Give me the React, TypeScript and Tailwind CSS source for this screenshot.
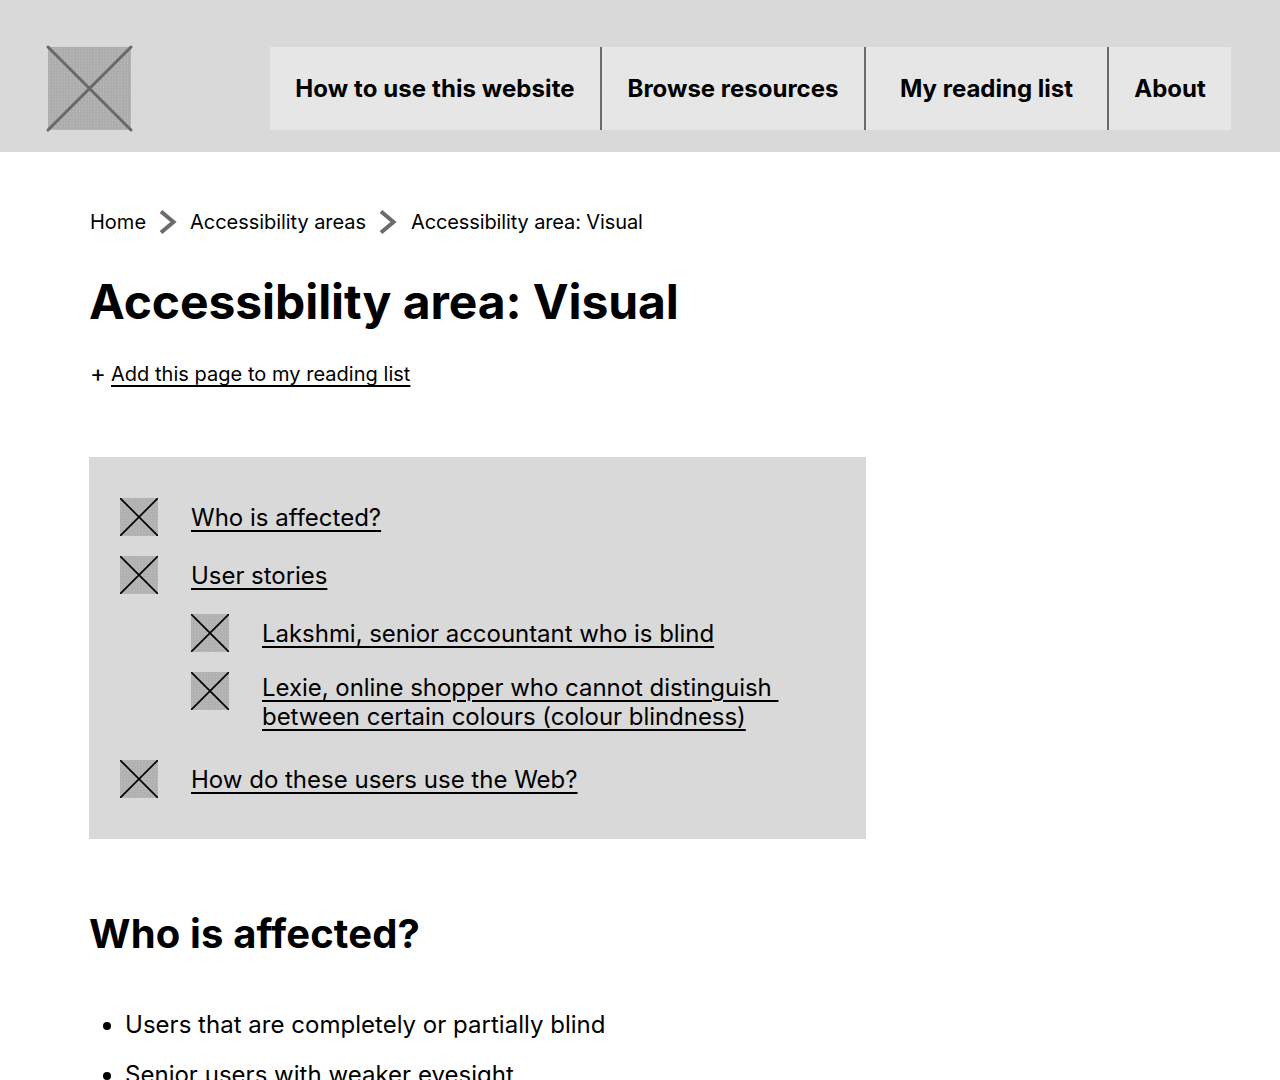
const navItems = [
  { label: "How to use this website", width: "w-[330px] tracking-[0.09px]" },
  { label: "Browse resources", width: "w-[264px]" },
  { label: "My reading list", width: "w-[243px]" },
  { label: "About", width: "w-[124px]" },
];

function Placeholder({ size, stroke, width, fill, cap }: { size: string; stroke: string; width: number; fill: string; cap: "round" | "butt" }) {
  return (
    <div className={`${size} ${fill} shrink-0 bg-[radial-gradient(#bebebe_0.6px,transparent_0.6px)] bg-[size:3px_3px]`}>
      <svg viewBox="0 0 100 100" className={`h-full w-full ${cap === "round" ? "overflow-visible" : ""}`} preserveAspectRatio="none">
        <path d="M0 0L100 100M100 0L0 100" stroke={stroke} strokeWidth={width} vectorEffect="non-scaling-stroke" fill="none" strokeLinecap={cap} />
      </svg>
    </div>
  );
}

function Chevron() {
  return (
    <svg viewBox="0 0 18 24" className="mx-[13px] h-[24px] w-[18px] shrink-0" fill="none">
      <path d="M2 1.5L14.5 12L2 22.5" stroke="#6b6b6b" strokeWidth="4" />
    </svg>
  );
}

function TocRow({ label, indent, multi, tight }: { label: React.ReactNode; indent?: boolean; multi?: boolean; tight?: boolean }) {
  return (
    <li className={`flex gap-[33px] ${indent ? "pl-[71px]" : ""}`}>
      <Placeholder size="h-[38px] w-[38px]" stroke="#000" width={1.7} fill="bg-[#b1b1b1]" cap="butt" />
      <a className={`${multi ? "mt-px" : "mt-[5px]"} ${tight ? "tracking-[-0.04px]" : ""} leading-[29px] underline decoration-2 underline-offset-[4px]`} href="#">
        {label}
      </a>
    </li>
  );
}

export default function App() {
  return (
    <div className="h-[1080px] overflow-hidden bg-white font-['Inter',sans-serif] text-black [font-optical-sizing:none]">
      <header className="flex h-[152px] items-start bg-[#d9d9d9] pl-[48px] pt-[47px]">
        <Placeholder size="h-[83px] w-[83px]" stroke="#686868" width={3} fill="bg-[#adadad]" cap="round" />
        <nav className="ml-[139px] flex h-[83px] bg-[#e6e6e6] bg-[radial-gradient(#dedede_0.6px,transparent_0.6px)] bg-[size:9px_9px]">
          {navItems.map((item, i) => (
            <a
              key={item.label}
              href="#"
              className={`flex items-center justify-center text-[24px] font-bold ${item.width} ${i > 0 ? "border-l-2 border-[#6b6b6b]" : ""}`}
            >
              {item.label}
            </a>
          ))}
        </nav>
      </header>

      <main className="pl-[90px]">
        <div className="mt-[58px] flex h-[24px] items-center text-[20px]">
          <span>Home</span>
          <Chevron />
          <span className="tracking-[-0.05px]">Accessibility areas</span>
          <Chevron />
          <span className="ml-px tracking-[-0.12px]">Accessibility area: Visual</span>
        </div>

        <h1 className="-ml-px mt-[39px] text-[48px] font-bold leading-[58px] tracking-[-0.08px]">Accessibility area: Visual</h1>

        <p className="mt-[31px] flex text-[20px] leading-[24px]">
          <span className="w-[21px] text-[24px]">+</span>
          <a className="tracking-[0.03px] underline underline-offset-[4px]" href="#">Add this page to my reading list</a>
        </p>

        <ul className="-ml-px mt-[71px] flex h-[382px] w-[777px] flex-col bg-[#d9d9d9] pl-[31px] pt-[41px] text-[24px]">
          <TocRow label="Who is affected?" />
          <div className="h-[20px]" />
          <TocRow tight label="User stories" />
          <div className="h-[20px]" />
          <TocRow indent tight label="Lakshmi, senior accountant who is blind" />
          <div className="h-[20px]" />
          <TocRow
            indent
            multi
            tight
            label={
              <>
                Lexie, online shopper who cannot distinguish&nbsp;
                <br />
                between certain colours (colour blindness)
              </>
            }
          />
          <div className="h-[29px]" />
          <TocRow label="How do these users use the Web?" />
        </ul>

        <h2 className="-ml-px mt-[65px] text-[40px] font-bold leading-[60px] tracking-[0.15px]">Who is affected?</h2>

        <ul className="mt-[46px] list-disc pl-[35px] text-[24px] leading-[29px] tracking-[0.02px]">
          <li>Users that are completely or partially blind</li>
          <li className="mt-[21px]">Senior users with weaker eyesight</li>
        </ul>
      </main>
    </div>
  );
}
